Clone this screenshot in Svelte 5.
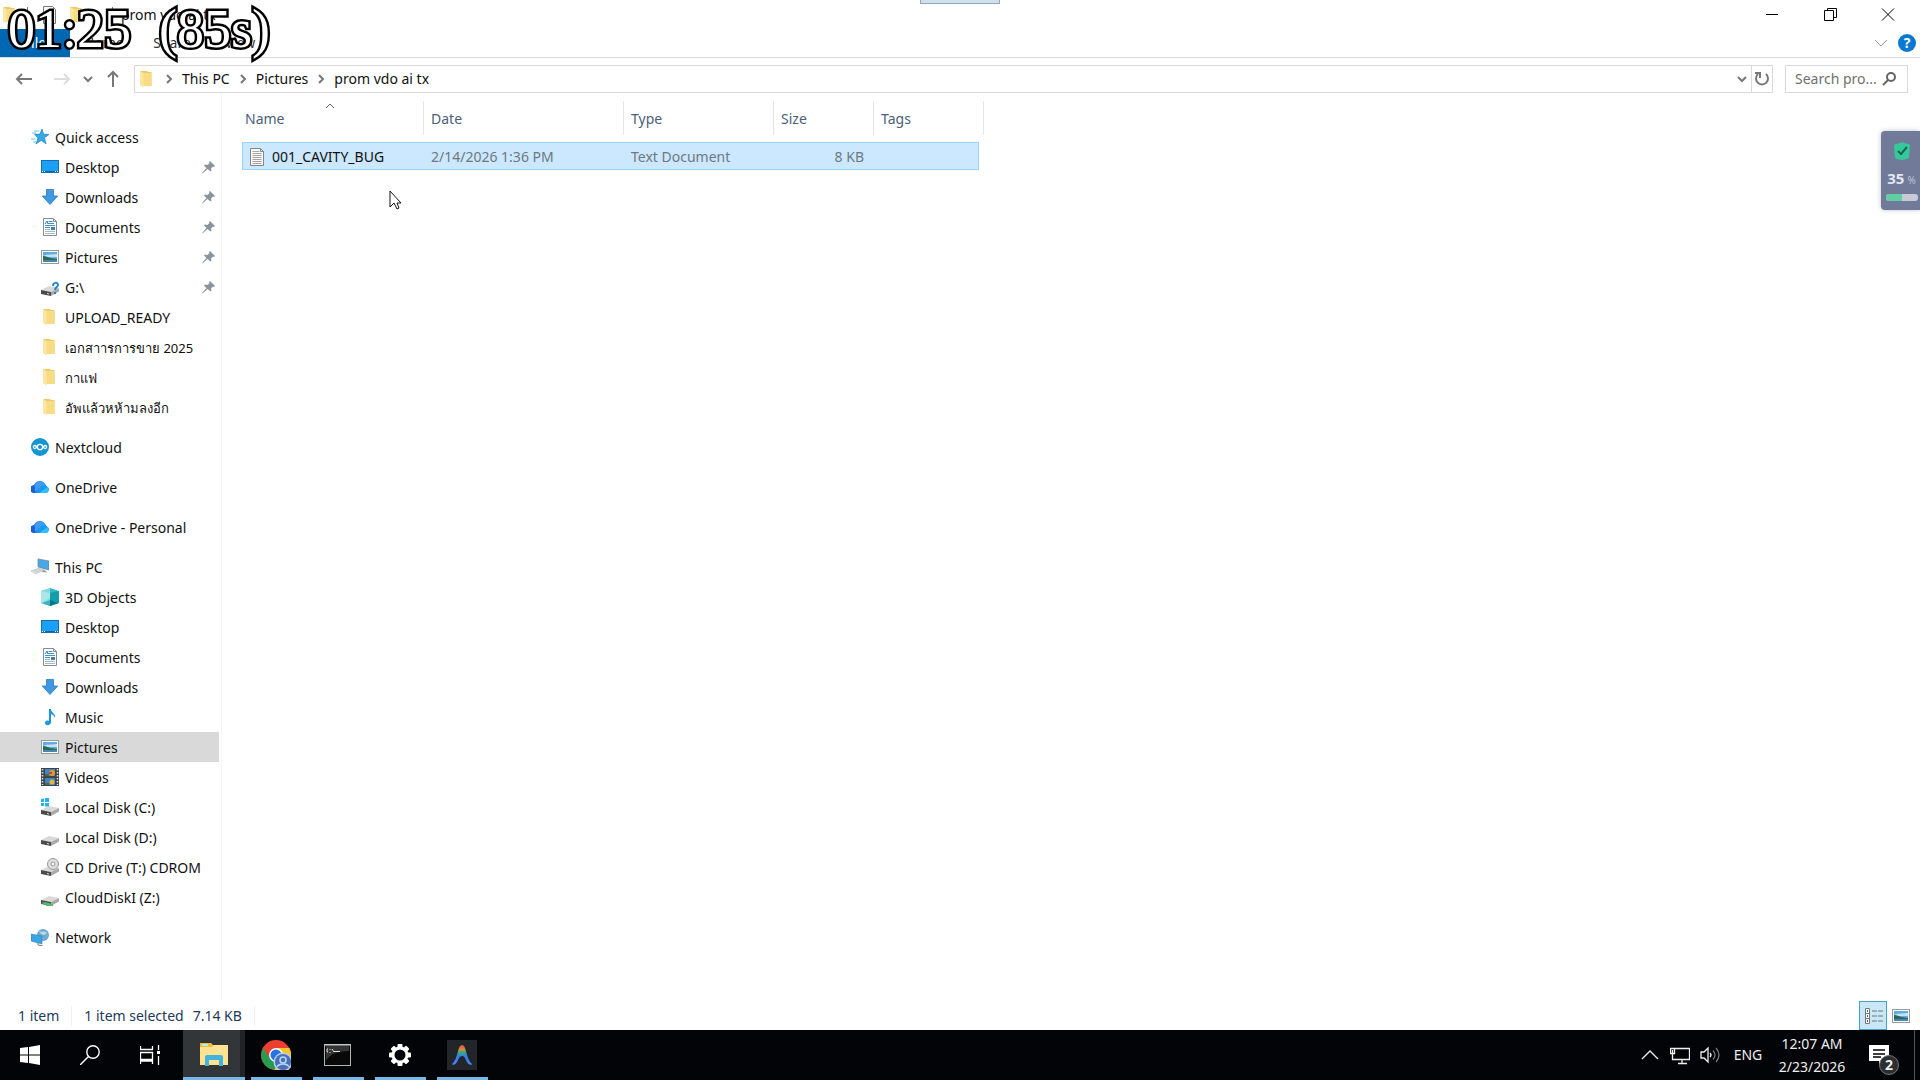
<script lang="ts">
	type Item = { label: string; icon: string; pinned?: boolean; selected?: boolean };
	type Group = { label: string; icon: string; items: Item[] };

	const groups: Group[] = [
		{
			label: 'Quick access',
			icon: 'star',
			items: [
				{ label: 'Desktop', icon: 'desktop', pinned: true },
				{ label: 'Downloads', icon: 'download', pinned: true },
				{ label: 'Documents', icon: 'document', pinned: true },
				{ label: 'Pictures', icon: 'picture', pinned: true },
				{ label: 'G:\\', icon: 'unknown-drive', pinned: true },
				{ label: 'UPLOAD_READY', icon: 'folder' },
				{ label: 'เอกสาารการขาย 2025', icon: 'folder' },
				{ label: 'กาแฟ', icon: 'folder' },
				{ label: 'อัพแล้วหห้ามลงอีก', icon: 'folder' }
			]
		},
		{ label: 'Nextcloud', icon: 'nextcloud', items: [] },
		{ label: 'OneDrive', icon: 'onedrive', items: [] },
		{ label: 'OneDrive - Personal', icon: 'onedrive', items: [] },
		{
			label: 'This PC',
			icon: 'pc',
			items: [
				{ label: '3D Objects', icon: 'cube' },
				{ label: 'Desktop', icon: 'desktop' },
				{ label: 'Documents', icon: 'document' },
				{ label: 'Downloads', icon: 'download' },
				{ label: 'Music', icon: 'music' },
				{ label: 'Pictures', icon: 'picture', selected: true },
				{ label: 'Videos', icon: 'video' },
				{ label: 'Local Disk (C:)', icon: 'windows-drive' },
				{ label: 'Local Disk (D:)', icon: 'drive' },
				{ label: 'CD Drive (T:) CDROM', icon: 'cd-drive' },
				{ label: 'CloudDiskI (Z:)', icon: 'net-drive' }
			]
		},
		{ label: 'Network', icon: 'network', items: [] }
	];

	const path = ['This PC', 'Pictures', 'prom vdo ai tx'];

	const apps = [
		{ name: 'File Explorer', icon: 'explorer', active: true },
		{ name: 'Google Chrome', icon: 'chrome', active: false },
		{ name: 'Command Prompt', icon: 'terminal', active: false },
		{ name: 'Settings', icon: 'gear', active: false },
		{ name: 'Antigravity', icon: 'arch', active: false }
	];

	const teeth = [0, 45, 90, 135, 180, 225, 270, 315];
	const isThai = (text: string) => /[\u0E00-\u0E7F]/.test(text);
	let query = $state('');
	let batteryLevel = $state(50);
</script>

{#snippet driveBody()}
	<path d="M0 12l8-4 10 2-8 4z" fill="#d9d9d9" />
	<path d="M0 12l10 2v4L0 16z" fill="#4a4a4a" />
	<path d="M10 14l8-4v3.500l-8 4.500z" fill="#a9a9a9" />
	<path d="M6 15.500l2 .5" stroke="#ddd" />
{/snippet}

{#snippet picture()}
	<rect x=".5" y="2.500" width="17" height="13" fill="#fff" stroke="#939ba3" />
	<rect x="2" y="4" width="14" height="10" fill="#62ace6" />
	<path d="M2 8c4-2 6-1 14-2v3H2z" fill="#c4e3f4" />
	<path d="M2 8c3 0 5 1 7 2l7 1v1H2z" fill="#2f6658" />
	<path d="M2 12h14v2H2z" fill="#4a87ad" />
{/snippet}

{#snippet icon(name: string)}
	<svg class="icon" viewBox="0 0 18 18" aria-hidden="true">
		{#if name === 'folder'}
			<path d="M2 1h7l1 1h3.500v14H5L2 15z" fill="#efcb68" />
			<path d="M5 3h8.500v13H5z" fill="#f8db85" />
			<path d="M2 1l3.500 2v14.500L2 15z" fill="#fbe6a2" />
		{:else if name === 'star'}
			<path d="M11 1l1.500 5.200 5.500.3-4.600 3.200 1.600 6.100-4.800-3.500L5 16l2-6L3.500 6.300 9 6.100z" fill="#35a9e8" stroke="#1583c6" stroke-width=".7" />
			<path d="M3 3h5M1 5h4M0 11h4M2 14h3" stroke="#6cc1ef" />
		{:else if name === 'desktop'}
			<rect x=".5" y="2.500" width="17" height="12" fill="#1aa0f8" stroke="#176fa9" />
			<path d="M1 13.500h16" stroke="#0c62a5" />
			<path d="M1 13.500h1m1 0h1m10 0h1m1 0h1" stroke="#fff" />
		{:else if name === 'download'}
			<path d="M5.500 1.500h7V8h4.200L9 16.500 1.300 8h4.200z" fill="#3f98e2" stroke="#2c79bd" stroke-width=".8" />
		{:else if name === 'document'}
			<path d="M2.500.5h10l3 3v14h-13z" fill="#fff" stroke="#8b8b8b" />
			<path d="M12.500.5v3h3" fill="none" stroke="#8b8b8b" />
			<path d="M7.500 3.500h4M7 5.500h6M4 7.500h10M4 9.500h5" stroke="#3e93cd" />
			<path d="M4 6l2-3 1 3" fill="none" stroke="#267fc0" />
			<path d="M4 11.500h5M4 13.500h10M4 15.500h10" stroke="#a2b9c8" />
			<rect x="10" y="9" width="4" height="3" fill="#457da5" />
		{:else if name === 'picture'}
			{@render picture()}
		{:else if name === 'nextcloud'}
			<circle cx="9" cy="9" r="9" fill="#1695d3" />
			<g fill="none" stroke="#fff" stroke-width="1.300">
				<circle cx="9" cy="9" r="2.700" />
				<circle cx="3.900" cy="9" r="1.500" />
				<circle cx="14.100" cy="9" r="1.500" />
			</g>
		{:else if name === 'onedrive'}
			<path d="M3.500 15a4 4 0 0 1-.5-8A6.200 6.200 0 0 1 14 6l2 3-7 6z" fill="#1c5fd2" />
			<path d="M3.500 6.500A6.200 6.200 0 0 1 14 6l1 2-6 2-5 4z" fill="#3f9df4" />
			<path d="M4 15c2-1 4-6 7-7.500 2-1 4-.5 5 1A3.400 3.400 0 0 1 14.500 15z" fill="#1699f5" />
			<path d="M8 15l8.500-6a3.400 3.400 0 0 1-2 6z" fill="#35bdf8" />
		{:else if name === 'pc'}
			<path d="M7 1l11 2v9L7 9z" fill="#47a9e8" stroke="#727e89" stroke-width=".7" />
			<path d="M12 11l-1 3 5 .5-2-2z" fill="#929ba2" />
			<path d="M0 13l8-3 5 2-8 4z" fill="#e2e5e6" stroke="#b6bbbd" stroke-width=".6" />
			<path d="M3 13l6-2M5 14l6-2" stroke="#a6abad" stroke-width=".5" />
		{:else if name === 'cube'}
			<path d="M0 3l9-3 9 3v12l-9 3-9-3z" fill="#32b6c5" />
			<path d="M0 3l9 2v13l-9-3z" fill="#83dedf" />
			<path d="M9 5l9-2v12l-9 3z" fill="#139dad" />
			<path d="M0 3l9-3v10L0 15z" fill="#c2f0ed" opacity=".6" />
			<path d="M9 12l8 3-8 3z" fill="#087787" />
			<path d="M1 15l8-3v6z" fill="#3fb4bb" />
		{:else if name === 'music'}
			<path d="M8 1h2c0 4 5 4 4 9-1-3-2-3-4-4v8c0 4-6 4-6 1 0-2 2-3 4-2z" fill="#1696e4" />
		{:else if name === 'video'}
			<path d="M0 0h18v18H0z" fill="#404448" />
			<path d="M4 1h10v7H4zM4 10h10v7H4z" fill="#3f83ca" />
			<circle cx="11" cy="5" r="3" fill="#dd9d2c" />
			<circle cx="11" cy="14" r="2.500" fill="#e1b63d" />
			<path d="M4 6h4v2H4zM4 15h4v2H4z" fill="#416d42" />
			<path d="M8 4h3v2H8z" fill="#c14336" />
			<path d="M1.500 1v16M16.500 1v16" stroke="#dce0e2" stroke-width="1.500" stroke-dasharray="1.5 1.500" />
		{:else if name === 'network'}
			<circle cx="12" cy="7" r="6" fill="#6aa8cc" />
			<path d="M8 3c2 2 5-1 8 2-2 3-5 2-7 0zM10 12c2-3 6-3 7-5" fill="#b9d8e5" />
			<path d="M0 6l11 2v8L0 13z" fill="#35a7e8" stroke="#427ea5" stroke-width=".6" />
			<path d="M7 15v2l5 1" fill="none" stroke="#747e86" />
		{:else if name === 'file'}
			<path d="M2.500.5h10l3 3v14h-13z" fill="#f8f8f8" stroke="#858585" />
			<path d="M12.500.5v3h3" fill="none" stroke="#858585" />
			<path d="M4.500 3.500h7M4.500 5.500h9M4.500 7.500h9M4.500 9.500h9M4.500 11.500h9M4.500 13.500h9M4.500 15.500h9" stroke="#a5a5a5" />
		{:else}
			{@render driveBody()}
			{#if name === 'unknown-drive'}
				<path d="M12 8c0-4 5-4 5-1 0 2-3 2-3 5M14 14v2" fill="none" stroke="#2687c6" stroke-width="2" />
			{:else if name === 'windows-drive'}
				<path d="M0 1l3-.5v3.500H0zM4 0h4v4H4zM0 5h3v3H0zM4 5h4v3.500H4z" fill="#24b4e9" />
			{:else if name === 'cd-drive'}
				<circle cx="12" cy="6" r="5.500" fill="#dedede" stroke="#989898" />
				<circle cx="12" cy="6" r="2" fill="#fff" stroke="#999" />
			{:else if name === 'net-drive'}
				<path d="M0 15l4-1 8 2v2H7v1H5v-2z" fill="#55b968" />
			{/if}
		{/if}
	</svg>
{/snippet}

{#snippet chevron()}
	<svg class="chevron" viewBox="0 0 12 12" aria-hidden="true"><path d="M2 4l4 4 4-4" fill="none" stroke="currentColor" stroke-width="2" /></svg>
{/snippet}

<div class="screen">
	<header class="titlebar">
		<div class="quick-tools">
			{@render icon('folder')}
			<span class="tool-line"></span>
			<svg class="icon" viewBox="0 0 18 18" aria-hidden="true"><path d="M1.500.5h9l3 3v14h-12z" fill="#fafafa" stroke="#777" /><path d="M4 9l2 3 5-7" fill="none" stroke="#dc552c" stroke-width="2" /></svg>
			{@render icon('folder')}
			<span class="tool-line title-line"></span>
			<h1>prom vdo ai tx</h1>
		</div>
		<div class="window-buttons">
			<button aria-label="Minimize"><svg viewBox="0 0 14 14"><path d="M1 7.500h12" /></svg></button>
			<button aria-label="Restore"><svg viewBox="0 0 14 14"><path d="M1.500 3.500h9v10h-9zM4.500 3.500v-2h9v9h-3" /></svg></button>
			<button aria-label="Close"><svg viewBox="0 0 14 14"><path d="M1 1.500l12 12M13 1.500l-12 12" /></svg></button>
		</div>
	</header>

	<div class="ribbon">
		<div class="tabs">
			<button class="file-tab">File</button>
			<button>Home</button>
			<button>Share</button>
			<button>View</button>
		</div>
		<button class="expand" aria-label="Expand the ribbon"><svg viewBox="0 0 14 14"><path d="M1 4l6 6 6-6" fill="none" stroke="#999" /></svg></button>
		<button class="help" aria-label="Help">?</button>
	</div>

	<div class="navigation">
		<div class="history">
			<button aria-label="Back"><svg viewBox="0 0 18 18"><path d="M17 9H2M7 4L2 9l5 5" /></svg></button>
			<button class="disabled" aria-label="Forward"><svg viewBox="0 0 18 18"><path d="M1 9h15M11 4l5 5-5 5" /></svg></button>
			<button class="recent" aria-label="Recent locations">{@render chevron()}</button>
			<button aria-label="Up"><svg viewBox="0 0 18 18"><path d="M9 17V2M4 7l5-5 5 5" /></svg></button>
		</div>
		<div class="address">
			{@render icon('folder')}
			<nav aria-label="Breadcrumb">
				{#each path as part}
					<span class="crumb-arrow">{@render chevron()}</span>
					<a href="#files">{part}</a>
				{/each}
			</nav>
			<button class="address-menu" aria-label="Previous locations">{@render chevron()}</button>
			<button class="refresh" aria-label="Refresh"><svg viewBox="0 0 18 18"><path d="M5 4a6 6 0 1 0 8 0M2 3h5v5" /></svg></button>
		</div>
		<label class="search">
			<input type="text" aria-label="Search" placeholder="Search pro..." bind:value={query} />
			<svg viewBox="0 0 16 16" aria-hidden="true"><circle cx="10" cy="6" r="4" /><path d="M7 9l-5 5" /></svg>
		</label>
	</div>

	<div class="body">
		<aside>
			{#each groups as group}
				<section>
					<a class="place" href="#files">{@render icon(group.icon)}<span>{group.label}</span></a>
					{#each group.items as item}
						<a class="place child" class:selected={item.selected} href="#files">
							{@render icon(item.icon)}
							<span class:thai={isThai(item.label)}>{item.label}</span>
							{#if item.pinned}
								<svg class="pin" viewBox="0 0 14 14" aria-hidden="true"><path d="M8 1l5 5-1 1-1-.5-2 2 .5 2-1 1-3-2.500L1 13l-1 .5.5-1L4.500 8 2 5.500l1-1 2.500.5 2-2L7 2z" fill="#89949b" /></svg>
							{/if}
						</a>
					{/each}
				</section>
			{/each}
		</aside>

		<main id="files">
			<table>
				<colgroup>
					<col class="col-name" /><col class="col-date" /><col class="col-type" /><col class="col-size" /><col class="col-tags" /><col class="col-edge" />
				</colgroup>
				<thead>
					<tr>
						<th class="sorted">Name<svg viewBox="0 0 10 6" aria-hidden="true"><path d="M1 5l4-4 4 4" fill="none" stroke="#666" /></svg></th>
						<th>Date</th>
						<th>Type</th>
						<th>Size</th>
						<th colspan="2">Tags</th>
					</tr>
				</thead>
				<tbody>
					<tr>
						<td class="file-name"><div>{@render icon('file')}<span>001_CAVITY_BUG</span></div></td>
						<td>2/14/2026 1:36 PM</td>
						<td>Text Document</td>
						<td class="size">8 KB</td>
						<td class="last"></td>
					</tr>
				</tbody>
			</table>
		</main>
	</div>

	<footer class="status">
		<span class="count">1 item</span>
		<span class="selection"><span>1 item selected</span><span>7.14 KB</span></span>
		<div class="views">
			<button class="current" aria-label="Details view"><svg viewBox="0 0 20 18"><path d="M2.500 1.500h4v15h-4zM2.500 6.500h4M2.500 11.500h4" fill="#fff" stroke="#777" /><path d="M4 4h1M4 9h1" stroke="#367eaa" stroke-width="2" /><path d="M4 14h1" stroke="#b3393b" stroke-width="2" /><path d="M9 4h5m1 0h5M9 9h5m1 0h5M9 14h5m1 0h5" stroke="#68777e" /></svg></button>
			<button aria-label="Large icons view">{@render icon('picture')}</button>
		</div>
	</footer>

	<div class="taskbar">
		<button class="system" aria-label="Start"><svg viewBox="0 0 20 20"><path d="M0 3l8-1v7.500H0zM9 2l11-2v9.500H9zM0 10.500h8V18l-8-1zM9 10.500h11V20L9 18z" fill="#fff" /></svg></button>
		<button class="system" aria-label="Search Windows"><svg viewBox="0 0 20 20" fill="none" stroke="#fff" stroke-width="1.400"><circle cx="13" cy="7" r="6.200" /><path d="M8.500 11.500L0 20" /></svg></button>
		<button class="system" aria-label="Task View"><svg viewBox="0 0 20 20" fill="none" stroke="#fff"><path d="M.5 1v3.500h12V1M.5 7.500v7h12v-7zM.5 19v-3h12v3M18.500 0v5M18.500 11v9" stroke-width="1.300" /><path d="M17 6h3v3h-3z" fill="#fff" stroke="none" /></svg></button>
		{#each apps as app}
			<button class="app" class:active={app.active} aria-label={app.name}>
				<svg viewBox="0 0 30 30">
					{#if app.icon === 'explorer'}
						<path d="M1 3h11l2 2h15v20H1z" fill="#f1bd3e" />
						<path d="M1 7h12l2-2h14v20H1z" fill="#ffe391" />
						<path d="M3 5h6" stroke="#b7eee8" stroke-width="2" />
						<path d="M6 17q0-2 2-2h14q2 0 2 2v9h-4v-6H10v6H6z" fill="#42b3dd" />
					{:else if app.icon === 'chrome'}
						<circle cx="15" cy="15" r="15" fill="#ed3f31" />
						<path d="M2 8l7 10.500 7 4L13 30A15 15 0 0 1 2 8z" fill="#259d50" />
						<path d="M15 8h13.300A15 15 0 0 1 13 30l8-11z" fill="#f6c729" />
						<circle cx="15" cy="15" r="7" fill="#fff" />
						<circle cx="15" cy="15" r="5.500" fill="#2574df" />
						<circle cx="22" cy="22" r="9.500" fill="#b6cff5" />
						<circle cx="22" cy="22" r="8" fill="#4a6fb5" />
						<g fill="none" stroke="#b8d6ff" stroke-width="1.500"><circle cx="22" cy="20" r="3" /><path d="M16 27c2-4 10-4 12 0" /></g>
					{:else if app.icon === 'terminal'}
						<rect x="1.500" y="4.500" width="26" height="21" fill="#090909" stroke="#b4b4b4" />
						<path d="M2 5h25" stroke="#ddd" />
						<path d="M3 6h23v5Q8 11 3 21z" fill="#353535" />
						<path d="M5 9h-1v3h1M7 9v1m0 2v1M9 9l2 3M11 11.500h6" fill="none" stroke="#ddd" />
					{:else if app.icon === 'gear'}
						<g fill="#fff">
							{#each teeth as angle}
								<rect x="12.500" y="4" width="5" height="5" rx="1" transform="rotate({angle} 15 15)" />
							{/each}
						</g>
						<circle cx="15" cy="15" r="7" fill="none" stroke="#fff" stroke-width="3" />
					{:else}
						<defs>
							<linearGradient id="archFill" x1="0" x2="0" y1="0" y2="1"><stop offset="0" stop-color="#e74d3b" /><stop offset=".22" stop-color="#d68a45" /><stop offset=".38" stop-color="#35ad73" /><stop offset=".55" stop-color="#357ff0" /><stop offset="1" stop-color="#4789f7" /></linearGradient>
						</defs>
						<path d="M0 0h30v30H0z" fill="#22262a" />
						<path d="M5 24c4-3 5-10 7-16 1.500-4 4.500-4 6 0 2 6 3 13 7 16-1 2-4 0-5-2-2-4-2.500-6-5-6s-3 2-5 6c-1 2-4 4-5 2z" fill="url(#archFill)" />
					{/if}
				</svg>
			</button>
		{/each}
		<div class="tray">
			<button aria-label="Show hidden icons"><svg viewBox="0 0 20 20"><path d="M2 14l8-8 8 8" /></svg></button>
			<button aria-label="Network connection"><svg viewBox="0 0 20 20"><path d="M5 3.500h14.500v11H2.500V9M8 18.500h9M12 15v3M.5 3.500h4v5h-4zM2.500 5v6" /></svg></button>
			<button aria-label="Volume"><svg viewBox="0 0 20 20"><path d="M1 7h3l4-4v14l-4-4H1zM10 8q2 2 0 4" /><path class="faint" d="M13 5.500q4 4.500 0 9M16 3q6 7 0 14" /></svg></button>
			<button class="language">ENG</button>
			<button class="clock"><span>12:07 AM</span><span>2/23/2026</span></button>
			<button class="notifications" aria-label="Notifications">
				<svg viewBox="0 0 20 20"><path d="M0 0h20v16h-6l-4 4v-4H0z" fill="#fff" stroke="none" /><path d="M4 5h12M4 9h12M4 12h8" stroke="#000" /></svg>
				<span>2</span>
			</button>
			<button class="show-desktop" aria-label="Show desktop"></button>
		</div>
	</div>

	<div class="timer"><span>01:25</span><span>(85s)</span></div>
	<div class="top-handle"></div>
	<div class="battery-widget">
		<svg viewBox="0 0 16 18" aria-hidden="true"><path d="M2 2l4-1 2-1 2 1 4 1q2 0 2 2l-1 11q0 2-2 2l-5 1-5-1q-2 0-2-2L0 4q0-2 2-2z" fill="#35c99a" /><path d="M4 9l3 3 6-7" fill="none" stroke="#17664f" stroke-width="2" /></svg>
		<div class="percent"><strong>35</strong><span>%</span></div>
		<div class="level"><div style="width: {batteryLevel}%"></div></div>
	</div>
	<svg class="pointer" viewBox="0 0 13 20" aria-hidden="true"><path d="M1 1v16l4-4 3 6 2-1-2-5h4z" fill="#fff" stroke="#111" /></svg>
</div>

<style>
	:global(body) {
		margin: 0;
		background: #fff;
	}

	.screen {
		position: relative;
		display: flex;
		flex-direction: column;
		min-height: 100vh;
		overflow: hidden;
		background: #fff;
		color: #111;
		font-family: "Noto Sans", "Open Sans", sans-serif;
		font-size: 14px;
		line-height: 20px;
	}

	button {
		display: flex;
		align-items: center;
		justify-content: center;
		padding: 0;
		border: 0;
		background: none;
		color: inherit;
		font: inherit;
	}

	a {
		color: inherit;
		text-decoration: none;
	}

	.icon {
		flex: none;
		width: 18px;
		height: 18px;
	}

	.chevron {
		width: 12px;
		height: 12px;
		color: #777;
	}

	/* Window frame */
	.titlebar {
		display: flex;
		justify-content: space-between;
		height: 29px;
	}

	.quick-tools {
		display: flex;
		align-items: center;
		gap: 8px;
		padding-left: 1px;
	}

	.tool-line {
		width: 1px;
		height: 16px;
		margin-right: 6px;
		background: #777;
	}

	.title-line {
		margin: 0 0 0 18px;
	}

	h1 {
		margin: 0;
		font-size: 14px;
		font-weight: 400;
	}

	.window-buttons {
		display: flex;
		padding: 0 3px 2px 0;
	}

	.window-buttons button {
		width: 58px;
	}

	.window-buttons svg {
		width: 14px;
		height: 14px;
		fill: none;
		stroke: #000;
	}

	.ribbon {
		display: flex;
		align-items: center;
		height: 28px;
		border-bottom: 1px solid #d9dadb;
	}

	.tabs {
		display: flex;
		flex: 1;
		align-self: stretch;
	}

	.tabs button {
		width: 68px;
		color: #333;
	}

	.tabs .file-tab {
		width: 70px;
		background: #0067b3;
		color: #fff;
	}

	.expand svg {
		width: 14px;
		height: 14px;
	}

	.help {
		width: 18px;
		height: 18px;
		margin: 0 4px 0 10px;
		border-radius: 50%;
		background: #0878d0;
		color: #fff;
		font-weight: 700;
	}

	/* Navigation */
	.navigation {
		display: flex;
		gap: 12px;
		padding: 7px 12px 0 15px;
	}

	.history {
		display: flex;
		align-items: center;
		gap: 10px;
		width: 107px;
	}

	.history svg,
	.refresh svg {
		width: 18px;
		height: 18px;
		fill: none;
		stroke: #777;
		stroke-width: 2;
	}

	.history .disabled {
		margin-left: 10px;
	}

	.history .disabled svg {
		stroke: #ddd;
	}

	.history .recent {
		width: 22px;
	}

	.history .recent .chevron {
		width: 12px;
		height: 12px;
	}

	.address {
		display: flex;
		flex: 1;
		align-items: center;
		height: 26px;
		padding-left: 3px;
		border: 1px solid #d9d9d9;
	}

	nav {
		display: flex;
		flex: 1;
		align-items: center;
	}

	.crumb-arrow {
		display: flex;
		margin: 0 7px;
		transform: rotate(-90deg);
	}

	.address-menu {
		width: 18px;
	}

	.refresh {
		align-self: stretch;
		width: 21px;
		border-left: 1px solid #d9d9d9;
	}

	.search {
		display: flex;
		align-items: center;
		box-sizing: border-box;
		width: 123px;
		padding: 0 10px 0 9px;
		border: 1px solid #d9d9d9;
	}

	.search input {
		flex: 1;
		min-width: 0;
		padding: 0;
		border: 0;
		outline: 0;
		background: none;
		font: inherit;
	}

	.search input::placeholder {
		color: #707070;
		opacity: 1;
	}

	.search svg {
		width: 16px;
		height: 16px;
		fill: none;
		stroke: #666;
		stroke-width: 2;
	}

	/* Folder tree and file list */
	.body {
		display: flex;
		flex: 1;
	}

	aside {
		display: flex;
		flex-direction: column;
		gap: 10px;
		box-sizing: border-box;
		width: 222px;
		padding: 29px 2px 0 0;
		border-right: 1px solid #f5f5f5;
	}

	.place {
		display: flex;
		align-items: center;
		gap: 6px;
		height: 30px;
		padding: 0 3px 0 31px;
		white-space: nowrap;
	}

	.place.child {
		padding-left: 41px;
	}

	.place span {
		line-height: 18px;
		padding-top: 2px;
	}

	.place .thai {
		font-size: 13px;
	}

	.place.selected {
		background: #d9d9d9;
	}

	.pin {
		width: 14px;
		height: 14px;
		margin-left: auto;
	}

	main {
		flex: 1;
		padding: 8px 0 0 20px;
	}

	table {
		width: 742px;
		border-collapse: separate;
		border-spacing: 0;
		table-layout: fixed;
	}

	.col-name {
		width: 182px;
	}

	.col-date {
		width: 200px;
	}

	.col-type {
		width: 150px;
	}

	.col-size {
		width: 100px;
	}

	.col-tags {
		width: 105px;
	}

	.col-edge {
		width: 5px;
	}

	th {
		position: relative;
		height: 32px;
		padding: 2px 7px 0;
		border-right: 1px solid #e5e5e5;
		color: #4c607a;
		font-weight: 400;
		text-align: left;
	}

	.sorted {
		padding-left: 3px;
	}

	.sorted svg {
		position: absolute;
		top: 2px;
		left: 83px;
		width: 10px;
		height: 6px;
	}

	tbody::before {
		content: '';
		display: block;
		height: 7px;
	}

	td {
		height: 24px;
		padding: 2px 10px 0 7px;
		border: solid #99d1ff;
		border-width: 1px 0;
		background: #cce8ff;
		color: #6d7980;
	}

	.file-name {
		padding-left: 5px;
		border-left-width: 1px;
		color: #111;
	}

	.file-name div {
		display: flex;
		align-items: center;
		gap: 6px;
	}

	.size {
		text-align: right;
	}

	td.last {
		border-right-width: 1px;
	}

	.status {
		display: flex;
		align-items: center;
		height: 29px;
		color: #1e395b;
	}

	.status > span {
		padding: 0 12px;
		border-right: 1px solid #f0f0f0;
	}

	.status .count {
		padding-left: 18px;
	}

	.status .selection {
		display: flex;
		gap: 9px;
	}

	.views {
		display: flex;
		align-self: stretch;
		gap: 5px;
		margin-left: auto;
		padding-right: 10px;
	}

	.views .current {
		box-sizing: border-box;
		width: 28px;
		border: 1px solid #42a1c9;
		background: #c9e7f5;
	}

	.views .current svg {
		width: 20px;
		height: 18px;
	}

	/* Taskbar */
	.taskbar {
		display: flex;
		height: 50px;
		background: #020407;
		color: #eee;
	}

	.system {
		width: 60px;
	}

	.system svg {
		width: 20px;
		height: 20px;
	}

	.app {
		position: relative;
		width: 62px;
	}

	.app svg {
		width: 30px;
		height: 30px;
	}

	.app::after {
		content: '';
		position: absolute;
		right: 5px;
		bottom: 0;
		left: 6px;
		height: 3px;
		background: #78b8e6;
	}

	.app.active {
		margin-left: 3px;
		background: linear-gradient(90deg, #333639 57px, #202326 57px);
	}

	.app.active::after {
		right: 0;
		left: 0;
	}

	.tray {
		display: flex;
		margin-left: auto;
	}

	.tray button {
		width: 30px;
	}

	.tray svg {
		width: 20px;
		height: 20px;
		fill: none;
		stroke: #eee;
		stroke-width: 1.3;
	}

	.tray .faint {
		stroke: #777;
	}

	.tray .language {
		width: 46px;
	}

	.tray .clock {
		flex-direction: column;
		width: 82px;
		line-height: 23px;
	}

	.tray .notifications {
		position: relative;
		width: 52px;
	}

	.notifications span {
		position: absolute;
		right: 6px;
		bottom: 5px;
		width: 18px;
		border: 1px solid #777;
		border-radius: 50%;
		background: #2c2e31;
		line-height: 18px;
		font-weight: 700;
	}

	.tray .show-desktop {
		width: 6px;
		margin-left: 9px;
		border-left: 1px solid #555;
	}

	/* Floating overlays */
	.timer {
		position: absolute;
		top: 0;
		left: 8px;
		display: flex;
		gap: 28px;
		color: #fff;
		font-family: "Liberation Serif", serif;
		font-size: 54px;
		line-height: 58px;
		paint-order: stroke fill;
		-webkit-text-stroke: 5px #000;
	}

	.top-handle {
		position: absolute;
		top: 0;
		left: 50%;
		box-sizing: border-box;
		width: 80px;
		height: 4px;
		margin-left: -40px;
		border: solid #8ea9bb;
		border-width: 0 1px 1px;
		background: #d1e1ec;
	}

	.battery-widget {
		position: absolute;
		top: 131px;
		right: 0;
		display: flex;
		flex-direction: column;
		align-items: center;
		box-sizing: border-box;
		width: 39px;
		height: 79px;
		padding: 11px 2px 0 4px;
		border-radius: 4px 0 0 4px;
		background: #717a99;
		box-shadow: 0 0 5px #bbc2cd;
		color: #e3e7f3;
	}

	.battery-widget svg {
		width: 16px;
		height: 18px;
	}

	.percent {
		display: flex;
		align-items: baseline;
		gap: 3px;
		padding-top: 8px;
	}

	.percent strong {
		font-size: 15px;
	}

	.percent span {
		color: #bcc3d5;
		font-size: 10px;
	}

	.level {
		width: 32px;
		height: 7px;
		margin-top: 4px;
		overflow: hidden;
		border-radius: 3px;
		background: #c8cbd6;
	}

	.level div {
		height: 100%;
		background: #61cfa3;
	}

	.pointer {
		position: absolute;
		top: 190px;
		left: 389px;
		width: 13px;
		height: 20px;
	}
</style>
